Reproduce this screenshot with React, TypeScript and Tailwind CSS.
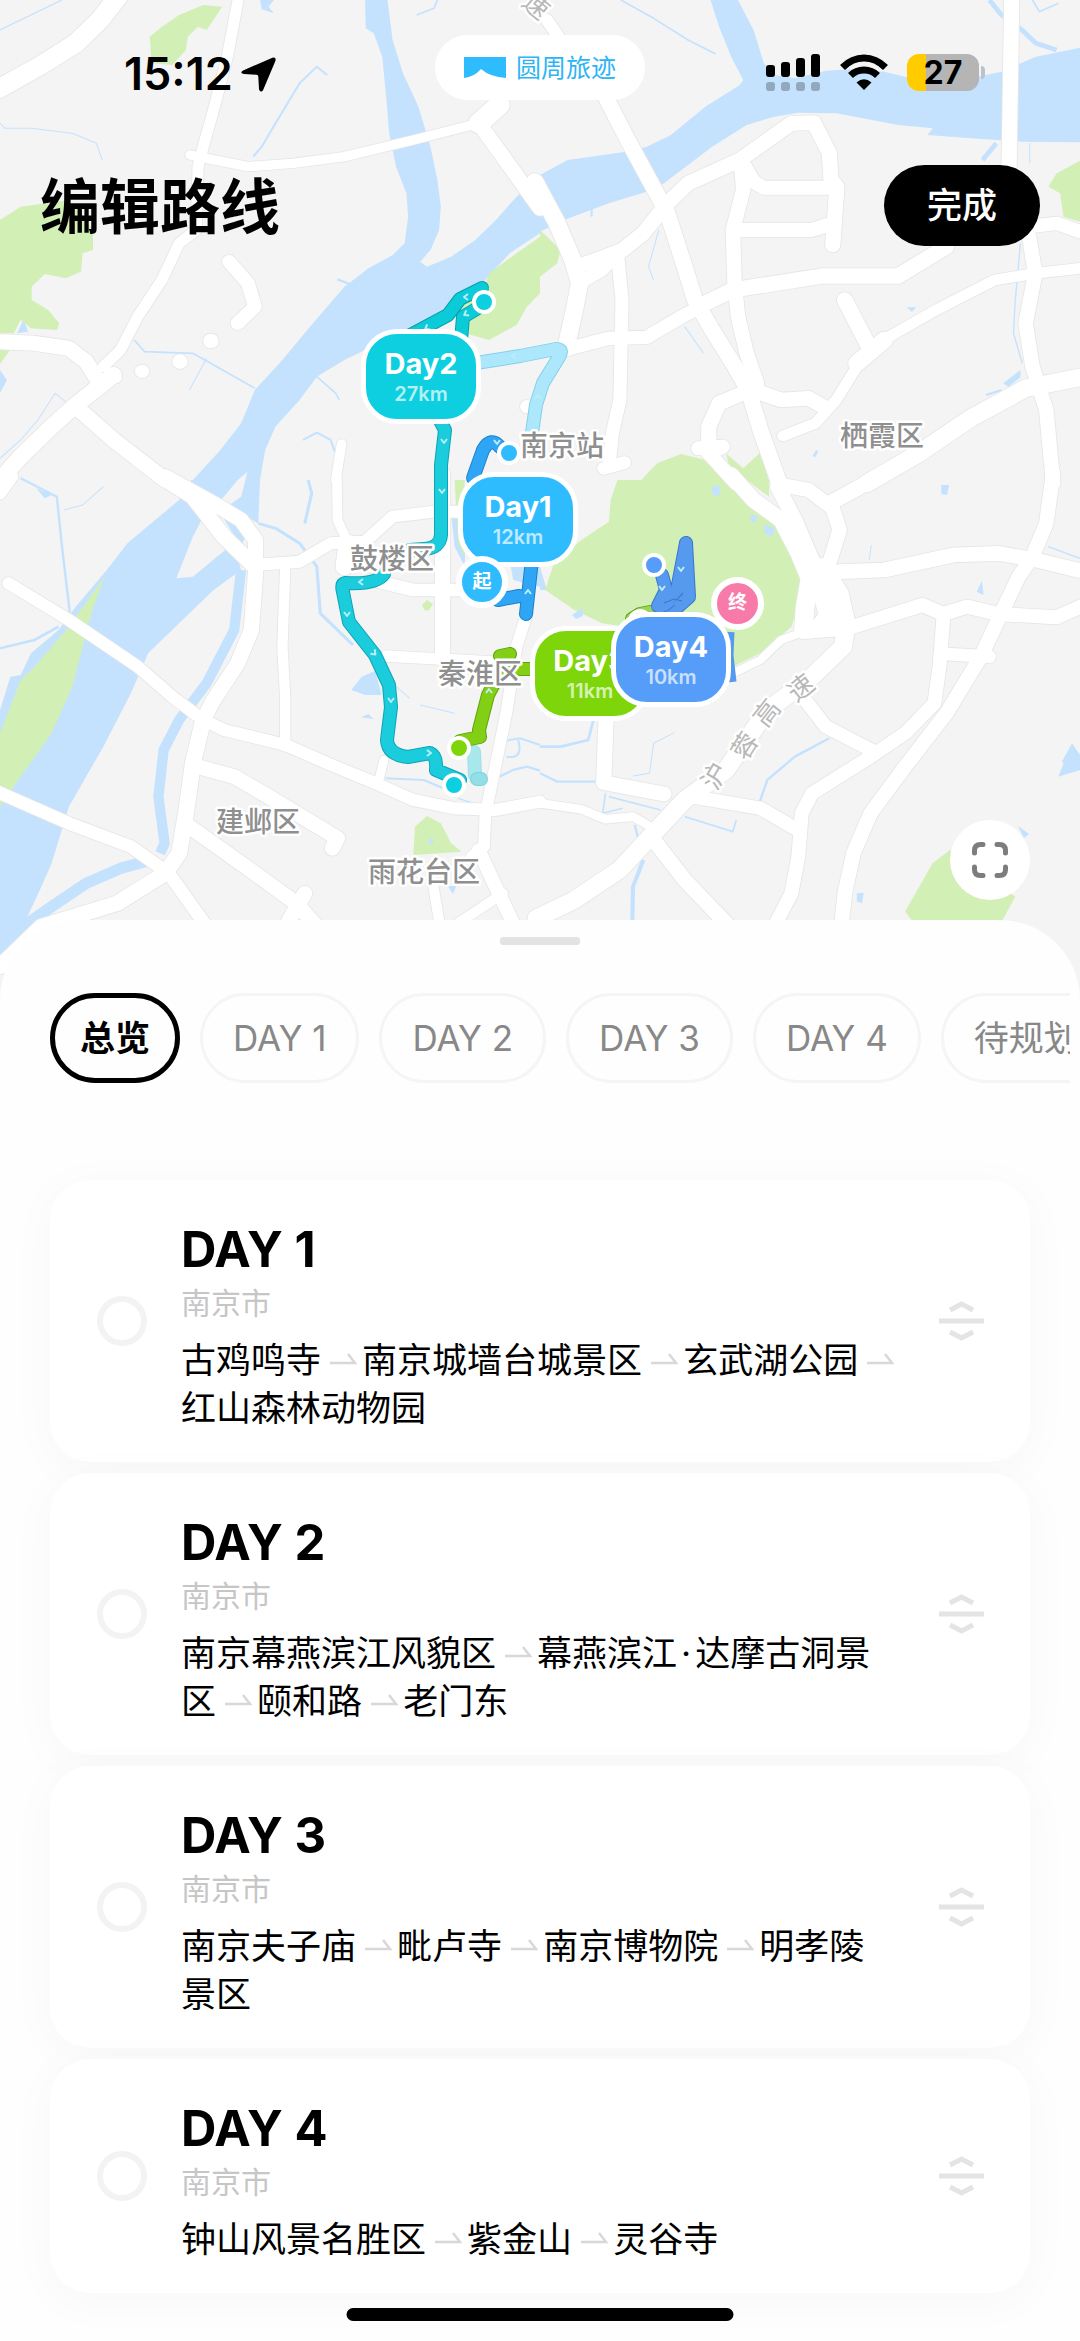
import { Fragment, useState } from "react"

type Road = [d: string, width: number]

interface Tile {
  x: number
  y: number
  water: string[]
  streams: Road[]
  parks: string[]
  roads: Road[]
}

// Each tile covers 540x480 of the map and has its own 1568x1440 grid
const tiles: Tile[] = [
  {
    x: 0,
    y: 0,
    water: [
      "M1568 530L1500 590L1440 660L1380 720L1310 770L1240 800L1220 785L1250 750L1275 690L1280 620L1270 540L1250 440L1215 320L1170 220L1140 120L1125 0H1060L1062 85L1085 100L1110 170L1122 300L1130 400L1150 500L1180 580L1185 650L1175 730L1140 765L1070 805L1000 860L900 980L820 1080L740 1170L700 1270L640 1350L560 1440H690L720 1415V1440H755L770 1350L800 1280L870 1200L920 1130L1000 1080L1060 1050L1200 990L1400 850L1480 760L1568 700Z",
      "M0 1110L20 1140L0 1180Z",
      "M68 958L82 995L50 1000Z",
      "M755 0H795L780 20L795 40L760 28Z",
    ],
    streams: [
      ["M950 225L920 200L870 250L800 370L760 440L735 470", 6],
      ["M0 90L180 0", 4],
      ["M390 1020L420 1055L560 1060L740 1165", 5],
      ["M600 1075L550 1170", 3],
      ["M880 1320L920 1298L960 1320L972 1355", 6],
      ["M985 1200L975 1180L920 1130", 5],
      ["M190 1205L160 1180L110 1260L60 1320L0 1375", 3],
      ["M0 370L15 385L90 385L210 400L280 430L297 480", 3],
      ["M1210 45L1260 25L1270 0", 5],
      ["M980 838L1015 852", 7],
    ],
    parks: [
      "M435 110L470 80L520 45L590 15L645 20L620 60L600 90L575 80L545 110L540 150L500 195L440 190Z",
      "M0 660L60 620L200 600L270 690V750L240 760L235 815L190 835L130 822L92 860V900L140 930L172 970L165 990L90 985L60 960L40 1000H0Z",
      "M1568 710L1500 760L1420 820L1410 850L1330 920L1350 1000L1420 1020L1500 975L1530 920L1568 880Z",
      "M0 1045L28 1052L0 1092Z",
    ],
    roads: [
      ["M350 -20L290 60L220 130L120 195L-10 270", 56],
      ["M695 -20L660 170L620 330L590 440L575 500L570 690L520 730L470 840L400 950L350 1050L300 1100", 32],
      ["M552 465L600 475L720 500L850 490L1000 470L1200 420L1390 370", 28],
      ["M1390 370L1450 315", 60],
      ["M1390 370L1450 455L1568 625", 44],
      ["M-10 1025L100 1030L200 1045L250 1085L290 1150", 45],
      ["M330 1125L220 1215L150 1280L60 1370L0 1440", 48],
      ["M220 1220L330 1320L480 1440", 46],
      ["M665 785L720 850L740 920L690 970", 40],
      ["M335 1132h1", 36],
      ["M412 1114h1", 40],
      ["M522 1085h1", 44],
      ["M612 1023h1", 44],
      ["M992 1332L975 1440", 28],
      ["M1530 1220h1", 40],
    ],
  },
  {
    x: 540,
    y: 0,
    water: [
      "M0 525L80 480L240 457L310 440L380 405L480 320L580 255L590 240L555 170L520 80L495 0H575L620 90L650 190L680 225L740 235L830 212L900 208L1000 215L1100 240L1200 245L1340 215L1440 170L1568 143V427L1400 425L1250 415L1125 405L1140 385L1040 375L860 340L750 338L680 350L600 375L500 440L360 550L310 575L200 610L70 660L0 695Z",
      "M1345 1150L1395 1110V1132L1360 1160Z",
      "M1065 922H1092L1080 936Z",
    ],
    streams: [
      ["M235 0L330 55L430 120L510 162", 5],
      ["M1305 0L1340 45L1400 90L1440 130L1500 150", 14],
      ["M1430 0L1450 35L1505 10", 5],
      ["M1285 480L1325 430", 14],
      ["M150 625V650", 6],
      ["M1422 430V490", 3],
      ["M1395 730L1380 900L1375 1000L1400 1090", 4],
      ["M345 690L315 800L330 840", 3],
      ["M420 980L475 1060", 3],
      ["M1295 1185L1340 1170", 6],
      ["M795 1370L805 1352", 8],
    ],
    parks: [
      "M0 690L60 750L50 790L0 830Z",
      "M290 1445L340 1390L410 1362L480 1380L560 1445Z",
      "M540 1360L590 1405L640 1358L665 1445H560Z",
      "M1568 482L1500 520L1476 560L1510 580L1520 650L1568 665Z",
    ],
    roads: [
      ["M20 60L60 120", 36],
      ["M-15 545L50 670L95 780L115 850L100 930L75 1045", 50],
      ["M190 290L260 430L370 640L420 800L450 900L500 990L560 1090L605 1170L640 1290L695 1450", 46],
      ["M110 800L190 770L240 750L300 700L370 610L430 550L580 480L730 370L795 368L840 460L845 540L862 560L850 735", 44],
      ["M595 500L620 545L650 563H860", 42],
      ["M580 690H790L850 670", 42],
      ["M585 500L590 570L560 690L565 850L575 950L600 1060L630 1150", 42],
      ["M80 1047L200 1015L310 1012L420 945L470 920", 40],
      ["M470 915L560 870L820 828H1040L1180 740", 46],
      ["M130 840L180 810L225 760L238 900L232 1200L210 1300L200 1400", 38],
      ["M185 1405L245 1388", 38],
      ["M885 900L960 1050", 46],
      ["M1568 805L1440 820L1320 840L1150 930L980 1030L920 1100L860 1200L800 1270L705 1308", 32],
      ["M920 1090L1000 1020", 50],
      ["M600 1175L520 1210L490 1280V1340", 44],
      ["M630 1175L700 1200L780 1195L830 1225", 44],
      ["M460 1345L530 1340L490 1360L570 1450", 42],
      ["M1370 -20L1362 500", 44],
      ["M1420 680L1500 670L1568 695", 40],
      ["M1420 710L1438 820L1410 970L1430 1100L1470 1230L1490 1450", 42],
      ["M1568 1132L1410 1165L1250 1255L1100 1360L950 1450", 52],
    ],
  },
  {
    x: 0,
    y: 480,
    water: [
      "M555 0L520 60L370 190L310 270L220 380L170 450L90 520L60 585L30 590L0 690V1440L75 1320L120 1220L150 1150L200 980L300 800L380 640L430 520L520 430L620 330L700 270L680 190L630 230L560 290L512 295L560 170L590 110L650 50L690 0Z",
      "M720 -30L755 0L750 130L680 90L630 100L700 50Z",
      "M640 100L700 200L720 150Z",
      "M1020 630L1050 590L1090 572L1108 645H1060Z",
      "M1048 712L1070 702L1085 718Z",
      "M105 25L150 45L130 55Z",
      "M1310 100L1350 110V260L1320 200Z",
      "M1480 240H1568V320L1490 300Z",
      "M1300 1218H1325L1315 1242Z",
    ],
    streams: [
      ["M700 270L680 450L600 610L520 720L475 810L460 950L478 1090L465 1120", 30],
      ["M440 1140L350 1165L250 1210L150 1280L60 1345L0 1420", 34],
      ["M895 0L905 40L885 130", 9],
      ["M750 130L800 145L870 190L920 260L930 400L1025 495", 9],
      ["M60 -5L165 50L180 200L203 400", 7],
      ["M185 90L240 75L300 20", 3],
      ["M0 505L100 480L170 440", 8],
      ["M1120 895L1230 900L1300 930", 6],
      ["M1330 955L1390 975", 4],
      ["M1150 620L1190 655M1220 675L1320 700", 3],
      ["M1450 890L1490 870L1530 860L1568 872", 7],
      ["M1470 782L1510 775L1568 795", 6],
      ["M1470 830Q1520 840 1505 780", 6],
    ],
    parks: [
      "M303 290L265 400L240 500L210 620L150 760L60 890L0 980V760L60 600L100 560L200 440Z",
      "M1200 1125L1205 1040L1240 1008L1280 1030L1310 1090L1340 1115Z",
      "M1225 375L1240 360L1257 372L1245 392L1232 390Z",
      "M1320 0H1350L1340 110L1350 230L1330 190Z",
    ],
    roads: [
      ["M460 -15L560 50L650 170L740 260", 46],
      ["M480 -10L620 70L700 120L742 180L742 280L730 450L690 550L620 660L590 720", 44],
      ["M740 255L870 245L960 190L1060 185L1140 110L1260 95H1345", 36],
      ["M978 -10L980 120L1000 165", 28],
      ["M1010 190L1000 260", 52],
      ["M25 310L200 420L400 560L500 650L590 720L650 750L830 795L950 850L1080 905L1200 960L1320 985L1440 990L1568 965", 36],
      ["M828 270L820 500L828 650V800", 30],
      ["M590 720L560 850L540 1000L520 1120L480 1180L340 1270L120 1340L0 1460", 46],
      ["M-20 930L200 1030L380 1100L490 1180L600 1340", 38],
      ["M575 860L680 890L780 950L980 1075L965 1105", 44],
      ["M550 1040L700 1150L860 1270L920 1340", 44],
      ["M885 1240L840 1320", 44],
      ["M1080 300L1200 330H1370", 38],
      ["M1285 -20V530", 44],
      ["M1120 528L1500 550", 34],
      ["M1530 400L1500 500L1470 700L1410 1000L1405 1100L1370 1130", 34],
      ["M1390 1110L1430 1200L1490 1330", 40],
      ["M1255 1200L1278 1340", 30],
      ["M1115 840L1100 900", 26],
      ["M1460 1240L1330 1330", 30],
      ["M0 40L35 -10", 36],
    ],
  },
  {
    x: 540,
    y: 480,
    water: [
      "M1505 890L1520 850L1515 845L1545 790L1568 825V870Z",
      "M1165 15H1188L1182 45L1165 42Z",
      "M1268 335L1283 302L1288 345Z",
      "M1388 1038L1420 1062L1405 1075Z",
      "M920 1240L940 1238L935 1270L920 1265Z",
      "M0 260L20 330L0 330Z",
    ],
    streams: [
      ["M0 800H60L140 780L155 720", 8],
      ["M0 880L50 905H160", 7],
      ["M635 975L660 900L740 830L840 775", 7],
      ["M300 1140L270 1220L268 1330", 12],
      ["M190 940L182 1000L240 985M200 950L350 990M420 1010L560 1055L570 1020", 5],
      ["M275 1035L285 1075", 7],
      ["M270 888L318 880L330 790L390 758", 3],
      ["M1475 200L1568 235", 4],
      ["M962 195L956 240", 3],
    ],
    parks: [
      "M225 0L205 60L200 125L120 180L40 250L15 330L100 390L180 430L250 440L560 560L640 520L730 440L765 330L745 230L700 120L570 0Z",
      "M600 0H665V50Z",
      "M1060 1295L1140 1150L1190 1110L1380 1250L1335 1335H1090Z",
    ],
    roads: [
      ["M555 -15L620 60L700 120L750 220L790 320", 46],
      ["M690 20L740 120L790 240L830 400", 44],
      ["M700 15L780 30L850 85L870 150L840 250", 42],
      ["M850 65L1000 -20", 46],
      ["M820 260L870 340L890 430L880 500L780 600L660 690L540 870L420 960L330 1060L230 1170L100 1260L-10 1315", 52],
      ["M790 260L770 380L765 450L890 440", 54],
      ["M790 320L860 380L820 430", 54],
      ["M560 580L640 540L700 480L780 450", 24],
      ["M870 275L1000 270L1200 225L1330 220L1440 240L1580 275", 44],
      ["M1490 -20L1470 130L1430 230L1390 290L1330 420L1280 530L1180 700L1060 860L960 1000L910 1120L885 1240L875 1340", 42],
      ["M910 440L1110 375L1170 402L1240 380L1330 402L1500 412L1580 375", 42],
      ["M1172 400L1160 560L1145 670L1060 760L960 830L790 940L760 1000L750 1130L730 1240L680 1340", 40],
      ["M1180 522L1305 530", 38],
      ["M770 660L830 740L970 815", 40],
      ["M440 950L640 985L740 1045", 40],
      ["M192 710L185 908L360 942", 44],
      ["M0 970L120 988L190 1018L270 1010L320 1040", 26],
      ["M330 1080L420 1200L550 1340", 44],
    ],
  },
]

const tileTransform = (t: Tile) => `translate(${t.x} ${t.y}) scale(.3444 .3333)`

const routes = [
  { d: "M482 288L460 299L448 315L405 338M478 308L463 317L461 340", fill: "#0bcbd9", edge: "#0a9fae" },
  { d: "M470 364L520 356L556 349Q564 349 559 357L543 383L536 405L531 440", fill: "#ace7fb", edge: "#84d0ea" },
  { d: "M437 415L445 430L441 465V535Q440 548 424 549L410 550", fill: "#1bccdc", edge: "#0da3b4" },
  { d: "M384 574Q376 585 345 583Q341 584 343 592L349 622L375 655L389 685L391 707L387 740Q388 755 408 757L430 753Q437 756 436 770L460 780", fill: "#1bccdc", edge: "#0da3b4" },
  { d: "M474 752L475 775", fill: "#a8e8ec", edge: "#a0e0e6" },
  { d: "M477 779h4", fill: "#94dfe6", edge: "#7bd3dc" },
  { d: "M500 656L510 654M510 654L488 695L479 730L480 737L460 741M520 669H536", fill: "#82cf15", edge: "#5fa30c" },
  { d: "M473 478L483 450Q491 436 500 447", fill: "#2fa6f5", edge: "#1b81c9" },
  { d: "M498 600L519 596M532 560L526 614", fill: "#2fa6f5", edge: "#1b81c9" },
  { d: "M632 619L640 614L650 612", fill: "#9ad45c", edge: "#5fa30c" },
  { d: "M662 575L666 590L658 606M686 543L677 590L662 606M686 543L689 597L672 612", fill: "#559aee", edge: "#3b76cc" },
]

const chevrons = [
  [466, 297, 90], [427, 328, 60], [466, 314, 60], [514, 356, 90], [538, 397, 180],
  [444, 441, 0], [442, 491, 0], [361, 582, 90], [347, 614, 0], [374, 653, -45],
  [391, 700, 0], [429, 753, -90], [528, 592, 180], [497, 442, 0], [489, 691, 180],
  [681, 569, 0], [662, 588, 0],
]

const stops = [
  { x: 484, y: 302, color: "#0dcfe0" },
  { x: 509, y: 453, color: "#2fbcff" },
  { x: 454, y: 785, color: "#0dcfe0" },
  { x: 459, y: 748, color: "#7ed60a" },
  { x: 654, y: 565, color: "#559df9" },
  { x: 640, y: 621, color: "#7ed60a" },
]

const districts = [
  { name: "南京站", x: 520, y: 456 },
  { name: "栖霞区", x: 840, y: 446 },
  { name: "鼓楼区", x: 350, y: 569 },
  { name: "秦淮区", x: 438, y: 684 },
  { name: "建邺区", x: 216, y: 832 },
  { name: "雨花台区", x: 368, y: 882 },
]

const highway = [
  { char: "沪", x: 715, y: 776, angle: -60 },
  { char: "蓉", x: 745, y: 746, angle: -58 },
  { char: "高", x: 767, y: 713, angle: -52 },
  { char: "速", x: 801, y: 688, angle: -38 },
]

const dayPins = [
  { day: "Day1", km: "12km", className: "left-[458px] top-[472px] bg-[#2fbcff]" },
  { day: "Day2", km: "27km", className: "left-[361px] top-[329px] bg-[#0dcfe0]" },
  { day: "Day3", km: "11km", className: "left-[530px] top-[626px] bg-[#7ed60a]" },
  { day: "Day4", km: "10km", className: "left-[611px] top-[612px] bg-[#559df9]" },
]

const tabs = ["总览", "DAY 1", "DAY 2", "DAY 3", "DAY 4", "待规划"]

const days = [
  { title: "DAY 1", city: "南京市", places: ["古鸡鸣寺", "南京城墙台城景区", "玄武湖公园", "红山森林动物园"] },
  { title: "DAY 2", city: "南京市", places: ["南京幕燕滨江风貌区", "幕燕滨江·达摩古洞景区", "颐和路", "老门东"] },
  { title: "DAY 3", city: "南京市", places: ["南京夫子庙", "毗卢寺", "南京博物院", "明孝陵景区"] },
  { title: "DAY 4", city: "南京市", places: ["钟山风景名胜区", "紫金山", "灵谷寺"] },
]

function MapCanvas() {
  return (
    <svg
      viewBox="0 0 1080 1000"
      preserveAspectRatio="xMinYMin slice"
      className="absolute inset-0 h-full w-full"
      aria-hidden="true"
    >
      <rect width="1080" height="1000" fill="#f4f4f4" />
      {tiles.map((t, i) => (
        <g key={i} transform={tileTransform(t)}>
          {t.water.map((d) => (
            <path key={d} d={d} fill="#c4e2fe" />
          ))}
          {t.streams.map(([d, w]) => (
            <path key={d} d={d} fill="none" stroke="#c4e2fe" strokeWidth={w} strokeLinejoin="round" />
          ))}
          {t.parks.map((d) => (
            <path key={d} d={d} fill="#d2f0b5" />
          ))}
        </g>
      ))}
      {/* ponds inside the parks */}
      <g fill="#c4e2fe">
        <path d="M711 487l8-2 1 10-6 1zM751 514l7 3-3 6-5-3zM764 525l11 3-3 9-8-4zM572 615l10-7 1 8-7 3zM428 841l3-3 3 3-3 4z" />
      </g>

      {/* road casings go under every road fill so junctions stay open */}
      <g fill="none" strokeLinecap="round" strokeLinejoin="round">
        {tiles.map((t, i) => (
          <g key={i} transform={tileTransform(t)} stroke="#e6e6e6">
            {t.roads.map(([d, w]) => (
              <path key={d} d={d} strokeWidth={w + 5} />
            ))}
          </g>
        ))}
        {tiles.map((t, i) => (
          <g key={i} transform={tileTransform(t)} stroke="#ffffff">
            {t.roads.map(([d, w]) => (
              <path key={d} d={d} strokeWidth={w} />
            ))}
          </g>
        ))}
      </g>

      {/* day routes */}
      <g fill="none" strokeLinejoin="round">
        {routes.map((r) => (
          <g key={r.d}>
            <path d={r.d} stroke={r.edge} strokeWidth="14" strokeLinecap="round" />
            <path d={r.d} stroke={r.fill} strokeWidth="12" strokeLinecap="round" />
          </g>
        ))}
        <path d="M730 632L729 655L732 682" stroke="#559aee" strokeWidth="9" />
        <path d="M664 603l10 -4 8 2M667 611l8 -6" stroke="#3b76cc" strokeWidth="1" />
        {chevrons.map(([x, y, r]) => (
          <path
            key={`${x}-${y}`}
            d="M-3 -2L0 2L3 -2"
            transform={`translate(${x} ${y}) rotate(${r})`}
            stroke="#b9eef8"
            strokeWidth="2"
          />
        ))}
      </g>

      {stops.map((s) => (
        <circle key={`${s.x}-${s.y}`} cx={s.x} cy={s.y} r="10" fill={s.color} stroke="#fff" strokeWidth="4" />
      ))}

      <g
        fill="#8f8f8f"
        stroke="#ffffff"
        strokeWidth="5"
        strokeLinejoin="round"
        className="font-['Noto_Sans_CJK_SC',sans-serif] text-[28px] font-medium [paint-order:stroke]"
      >
        {districts.map((p) => (
          <text key={p.name} x={p.x} y={p.y}>
            {p.name}
          </text>
        ))}
        <g fill="#b8b8b8" textAnchor="middle" className="text-[26px] font-normal">
          {highway.map((c) => (
            <text key={c.char} transform={`translate(${c.x} ${c.y}) rotate(${c.angle})`} y="9">
              {c.char}
            </text>
          ))}
          <text transform="translate(536 6) rotate(40)" y="9">
            速
          </text>
        </g>
      </g>
    </svg>
  )
}

function StatusBar() {
  return (
    <div className="relative grid h-[135px] grid-cols-[1fr_auto_1fr] items-start">
      <div className="flex items-center gap-2 pt-[48px] pl-[124px]">
        <span className="text-[45px] leading-[52px] font-semibold">15:12</span>
        <svg width="35" height="35" viewBox="0 0 34 34" aria-hidden="true">
          <path
            d="M30.500 .8Q34.500 -.5 33.400 4L21.500 32Q19.500 35.500 17.500 31.500L16.800 19Q16.800 17.300 15 17.200L3 16.600Q-1.800 15.500 2 13Z"
            fill="#000"
          />
        </svg>
      </div>

      <div className="mt-[35px] flex h-[65px] w-[210px] items-center justify-center gap-[10px] rounded-full bg-white">
        <svg width="42" height="22" viewBox="0 0 42 22" aria-hidden="true">
          <path d="M0 0H42V21Q26 20 17 12Q10 20 0 21Z" fill="#2fbcff" />
        </svg>
        <span className="text-[25px] leading-[36px] text-[#2db4f5]">圆周旅迹</span>
      </div>

      <div className="flex justify-end gap-[19px] pt-[54px] pr-[95px]">
        <svg width="55" height="37" viewBox="0 0 55 37" aria-hidden="true">
          <rect x="0" y="11" width="9" height="12" rx="3" />
          <rect x="15" y="8" width="9" height="15" rx="3" />
          <rect x="30" y="4" width="9" height="19" rx="3" />
          <rect x="45" y="0" width="9" height="23" rx="3" />
          <g fill="#000" opacity=".25">
            <rect x="0" y="28" width="9" height="9" rx="3" />
            <rect x="15" y="28" width="9" height="9" rx="3" />
            <rect x="30" y="28" width="9" height="9" rx="3" />
            <rect x="45" y="28" width="9" height="9" rx="3" />
          </g>
        </svg>
        <svg width="48" height="36" viewBox="0 0 48 36" aria-hidden="true">
          <g fill="none" stroke="#000" strokeWidth="7">
            <path d="M2.500 13.500Q12 4 24 4T45.500 13.500" />
            <path d="M10.500 21.500Q16 16 24 16T37.500 21.500" />
          </g>
          <path d="M24 36L16.500 28.500Q24 22 31.500 28.500Z" />
        </svg>
        <div className="flex items-center gap-[2px]">
          <div className="flex h-[37px] w-[72px] items-center justify-center rounded-[12px] bg-[linear-gradient(90deg,#ffcc00_27%,#b5b5b5_27%)]">
            <span className="text-[32px] leading-[37px] font-bold">27</span>
          </div>
          <div className="h-[13px] w-[4px] rounded-r-full bg-[#b9c3cc]" />
        </div>
      </div>
    </div>
  )
}

// The trailing space is small and may hang at the end of a line
function RouteArrow() {
  return (
    <span className="text-[18px] leading-none">
      <svg className="mb-2 ml-[9px] inline-block align-baseline" width="27" height="12" viewBox="0 0 27 12" aria-label="到">
        <path d="M0 10H25L18 1" fill="none" stroke="#d8d8d8" strokeWidth="2.500" />
      </svg>{" "}
    </span>
  )
}

function PlaceName({ name }: { name: string }) {
  const [first, second] = name.split("·")
  if (!second) return first

  return (
    <>
      {first}
      <span className="px-1">·</span>
      {second}
    </>
  )
}

function DayCard({ title, city, places }: (typeof days)[number]) {
  return (
    <li className="flex items-center rounded-[40px] bg-white pr-[46px] pl-[47px] shadow-[0_8px_50px_rgba(0,0,0,0.03)]">
      <input
        type="checkbox"
        aria-label={title}
        className="h-[50px] w-[50px] shrink-0 appearance-none rounded-full border-[6px] border-[#f3f3f3] checked:bg-black"
      />
      <div className="ml-[34px] flex-1 pt-[40px] pb-[30px]">
        <h2 className="text-[49px] leading-[60px] font-bold">{title}</h2>
        <p className="text-[30px] leading-[46px] text-[#c6c6c6]">{city}</p>
        <p className="mt-[10px] text-[35px] leading-[48px]">
          {places.map((place, i) => (
            <Fragment key={place}>
              <PlaceName name={place} />
              {i < places.length - 1 && <RouteArrow />}
            </Fragment>
          ))}
        </p>
      </div>
      <button type="button" aria-label="拖动排序" className="ml-[40px] shrink-0">
        <svg width="45" height="40" viewBox="0 0 45 40" fill="none" stroke="#e4e4e4" strokeWidth="5" aria-hidden="true">
          <path d="M11 9L22.500 3L34 9M0 20H45M11 31L22.500 37L34 31" />
        </svg>
      </button>
    </li>
  )
}

export default function App() {
  const [active, setActive] = useState("总览")

  return (
    <main className="relative min-h-screen overflow-hidden bg-[#fdfdfd] font-['Inter','Noto_Sans_CJK_SC',sans-serif] text-black">
      <section className="relative h-[1000px]">
        <MapCanvas />

        {dayPins.map((pin) => (
          <div
            key={pin.day}
            className={`absolute flex h-[95px] w-[120px] flex-col items-center justify-center rounded-[36px] border-[5px] border-white text-white ${pin.className}`}
          >
            <span className="text-[29px] leading-[34px] font-bold">{pin.day}</span>
            <span className="text-[20px] leading-[26px] font-semibold text-white/70">{pin.km}</span>
          </div>
        ))}
        <div className="absolute top-[556px] left-[456px] flex h-[52px] w-[52px] items-center justify-center rounded-full border-[6px] border-white bg-[#2fbcff] text-[19px] font-bold text-white">
          起
        </div>
        <div className="absolute top-[577px] left-[711px] flex h-[53px] w-[53px] items-center justify-center rounded-full border-[6px] border-white bg-[#f77aa8] text-[19px] font-bold text-white">
          终
        </div>

        <StatusBar />

        <header className="relative flex items-start justify-between pt-[30px] pr-[40px] pl-[40px]">
          <h1 className="text-[60px] leading-[85px] font-bold">编辑路线</h1>
          <button type="button" className="h-[81px] w-[156px] rounded-full bg-black text-[35px] font-medium text-white">
            完成
          </button>
        </header>

        <button
          type="button"
          aria-label="全屏"
          className="absolute top-[820px] right-[50px] flex h-[80px] w-[80px] items-center justify-center rounded-full bg-white"
        >
          <svg width="36" height="36" viewBox="0 0 36 36" fill="none" stroke="#7d7d7d" strokeWidth="5" strokeLinecap="round" aria-hidden="true">
            <path d="M2.500 11V8.500Q2.500 2.500 8.500 2.500H11M25 2.500H27.500Q33.500 2.500 33.500 8.500V11M33.500 25V27.500Q33.500 33.500 27.500 33.500H25M11 33.500H8.500Q2.500 33.500 2.500 27.500V25" />
          </svg>
        </button>
      </section>

      <section className="relative -mt-[80px] rounded-t-[80px] bg-[#fefefe] pt-[17px]">
        <div className="mx-auto h-[8px] w-[80px] rounded-[3px] bg-[#e3e3e3]" />

        <nav className="mt-[48px] mr-[10px] flex gap-[20px] overflow-hidden pl-[50px]">
          {tabs.map((tab) => (
            <button
              key={tab}
              type="button"
              onClick={() => setActive(tab)}
              className={
                tab === active
                  ? "h-[90px] shrink-0 rounded-full border-[5px] border-black px-[25px] text-[35px] font-bold"
                  : "h-[90px] shrink-0 rounded-full border-[3px] border-[#f5f5f5] px-[30px] text-[35px] text-[#888]"
              }
            >
              {tab}
            </button>
          ))}
        </nav>

        <ul className="flex flex-col gap-[11px] px-[50px] pt-[97px] pb-[48px]">
          {days.map((day) => (
            <DayCard key={day.title} {...day} />
          ))}
        </ul>
      </section>

      <div className="absolute bottom-[20px] left-1/2 h-[13px] w-[387px] -translate-x-1/2 rounded-full bg-black" />
    </main>
  )
}
